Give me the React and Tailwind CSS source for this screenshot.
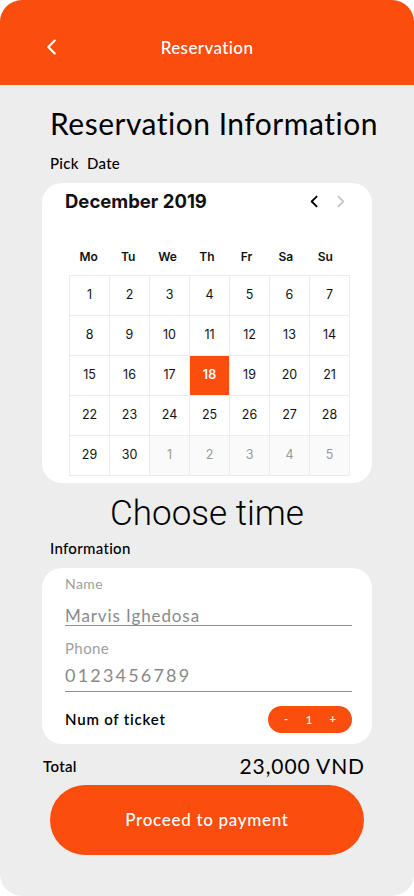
import React from "react";

const WEEKDAYS = ["Mo", "Tu", "We", "Th", "Fr", "Sa", "Su"];

// December 2019 grid as drawn in the design: 30 days, then 5 days of next month
const DAYS = [
  ...Array.from({ length: 30 }, (_, i) => ({ d: i + 1, cur: true })),
  ...Array.from({ length: 5 }, (_, i) => ({ d: i + 1, cur: false })),
];

function Chevron({ dir = "left", className = "", width = 2.6 }) {
  return (
    <svg viewBox="0 0 24 24" className={className} fill="none" stroke="currentColor" strokeWidth={width} strokeLinecap="round" strokeLinejoin="round">
      {dir === "left" ? <path d="M15 5l-7 7 7 7" /> : <path d="M9 5l7 7-7 7" />}
    </svg>
  );
}

export default function App() {
  return (
    <div className="w-[414px] h-[896px] bg-white">
      <div className="w-full h-full bg-[#ededed] rounded-[22px] overflow-hidden flex flex-col font-['Lato',sans-serif]">
        {/* header */}
        <div className="h-[85px] bg-[#fb4d0d] flex items-center relative shrink-0">
          <Chevron dir="left" width={2.4} className="absolute left-[41px] top-[36px] w-[22px] h-[22px] text-white" />
          <div className="w-full text-center text-white text-[17px] font-medium pt-[10px] tracking-[0.4px]">Reservation</div>
        </div>

        <div className="px-[42px]">
          <h1 className="pl-[8px] -mr-[30px] mt-[20px] text-[30px] leading-[36px] text-black tracking-[0.5px] whitespace-nowrap">Reservation Information</h1>
          <div className="pl-[8px] mt-[12px] text-[15px] leading-[20px] font-medium text-black tracking-[0.3px]">Pick&nbsp; Date</div>

          {/* calendar */}
          <div className="mt-[10px] bg-white rounded-[20px] h-[300px] px-[27px] pt-[5px] font-['Inter',sans-serif]">
            <div className="flex items-center justify-between">
              <div className="-ml-[4px] text-[18.5px] font-bold text-[#111]">December 2019</div>
              <div className="flex items-center gap-[9px] -mr-[4px]">
                <Chevron dir="left" className="w-[17px] h-[17px] text-black" />
                <Chevron dir="right" className="w-[17px] h-[17px] text-[#c8c8c8]" />
              </div>
            </div>
            <div className="grid grid-cols-7 mt-[32px] h-[18px] items-center">
              {WEEKDAYS.map((w) => (
                <div key={w} className="text-center text-[12px] font-semibold text-[#111]">{w}</div>
              ))}
            </div>
            <div className="grid grid-cols-7 mt-[9px] w-[281px] border-l border-t border-[#ececec]">
              {DAYS.map((c, i) => {
                const sel = c.cur && c.d === 18;
                return (
                  <div
                    key={i}
                    className={`h-[40px] flex items-center justify-center text-[12.5px] border-r border-b border-[#ececec] ${
                      sel ? "bg-[#fb4d0d] text-white font-semibold" : c.cur ? "bg-white text-[#111]" : "bg-[#fafafa] text-[#999]"
                    }`}
                  >
                    {c.d}
                  </div>
                );
              })}
            </div>
          </div>

          <div className="mt-[10px] text-center text-[35px] leading-[42px] font-light font-['Roboto',sans-serif] text-black">Choose time</div>
          <div className="pl-[8px] mt-[3px] text-[15px] leading-[20px] font-medium text-black tracking-[0.3px]">Information</div>

          {/* info card */}
          <div className="mt-[10px] bg-white rounded-[20px] h-[176px] px-[23px] pt-[6px] pr-[20px]">
            <div className="text-[14px] leading-[20px] text-[#a0a0a0] tracking-[0.4px]">Name</div>
            <div className="mt-[13px] text-[17px] leading-[18px] text-[#8a8a8a] tracking-[0.9px] border-b border-[#8f8f8f]">Marvis Ighedosa</div>
            <div className="mt-[12px] text-[15px] leading-[20px] text-[#a0a0a0] tracking-[0.4px]">Phone</div>
            <div className="mt-[5px] text-[18px] leading-[24px] text-[#8a8a8a] tracking-[2.2px] border-b border-[#8f8f8f] pb-[4px]">0123456789</div>
            <div className="mt-[14px] flex items-center justify-between">
              <div className="text-[15px] font-semibold text-black tracking-[0.8px]">Num of ticket</div>
              <div className="w-[84px] h-[27px] rounded-full bg-[#fb4d0d] flex items-center justify-between px-[16px] text-white text-[11px] font-bold">
                <span>-</span>
                <span className="font-normal text-[12px]">1</span>
                <span>+</span>
              </div>
            </div>
          </div>

          {/* total */}
          <div className="mt-[9px] flex items-end justify-between pr-[7px]">
            <div className="pl-[1px] text-[15px] font-semibold text-black leading-[20px] tracking-[0.3px]">Total</div>
            <div className="text-[21px] leading-[26px] text-black -mb-[3px] tracking-[0.9px]">23,000 VND</div>
          </div>

          <button className="mt-[9px] ml-[8px] w-[314px] h-[70px] rounded-[35px] bg-[#fb4d0d] text-white text-[17px] font-medium flex items-center justify-center tracking-[0.7px]">
            Proceed to payment
          </button>
        </div>
      </div>
    </div>
  );
}
